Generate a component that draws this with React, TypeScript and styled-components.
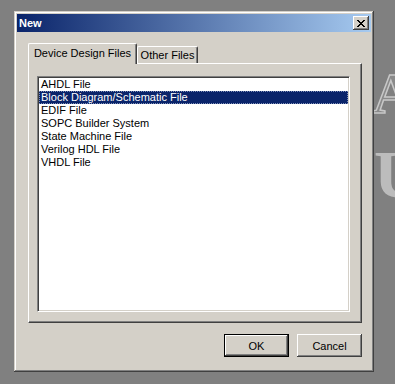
import React from "react";
import styled, { createGlobalStyle } from "styled-components";

const Global = createGlobalStyle`
  html, body { margin: 0; padding: 0; background: #808080; overflow: hidden; }
  #root { width: 395px; height: 384px; }
`;

const Desktop = styled.div`
  position: relative;
  width: 395px;
  height: 384px;
  box-sizing: border-box;
  padding: 11px 0 0 14px;
  background: #808080;
  overflow: hidden;
  font-family: "Liberation Sans", Arial, sans-serif;
  font-size: 11px;
  color: #000;
`;

const BackdropLetter = styled.span<{ $top: number; $left: number; $size: number; $outline?: boolean }>`
  position: absolute;
  top: ${(p) => p.$top}px;
  left: ${(p) => p.$left}px;
  font-family: "Liberation Serif", "Times New Roman", serif;
  font-weight: bold;
  font-size: ${(p) => p.$size}px;
  line-height: 1;
  color: ${(p) => (p.$outline ? "#8a8a8a" : "#bcbcbc")};
  -webkit-text-stroke: ${(p) => (p.$outline ? "1.5px #c8c8c8" : "0")};
`;

const Dialog = styled.div`
  position: relative;
  z-index: 1;
  width: 360px;
  height: 361px;
  box-sizing: border-box;
  padding: 3px;
  background: #d4d0c8;
  box-shadow: inset -1px -1px #404040, inset 1px 1px #d4d0c8, inset -2px -2px #808080,
    inset 2px 2px #ffffff;
  display: flex;
  flex-direction: column;
`;

const TitleBar = styled.div`
  height: 18px;
  flex: none;
  display: flex;
  align-items: center;
  justify-content: space-between;
  padding: 0 2px 0 2px;
  background: linear-gradient(to right, #0a246a, #a6caf0);
`;

const Title = styled.span`
  color: #fff;
  font-weight: bold;
  font-size: 11px;
  line-height: 13px;
`;

const CloseButton = styled.div`
  width: 16px;
  height: 14px;
  box-sizing: border-box;
  background: #d4d0c8;
  box-shadow: inset -1px -1px #404040, inset 1px 1px #ffffff, inset -2px -2px #808080;
  display: flex;
  align-items: center;
  justify-content: center;
`;

const Body = styled.div`
  flex: 1;
  display: flex;
  flex-direction: column;
  padding: 11px 9px 0 11px;
`;

const TabRow = styled.div`
  display: flex;
  align-items: flex-end;
  height: 20px;
  position: relative;
  z-index: 2;
`;

const Tab = styled.div<{ $active?: boolean; $width: number }>`
  box-sizing: border-box;
  width: ${(p) => p.$width}px;
  height: ${(p) => (p.$active ? 21 : 17)}px;
  margin-bottom: ${(p) => (p.$active ? -1 : 0)}px;
  padding-top: ${(p) => (p.$active ? 3 : 2)}px;
  text-align: center;
  line-height: 13px;
  background: #d4d0c8;
  border-left: 1px solid #ffffff;
  border-top: 1px solid #ffffff;
  border-right: 1px solid #404040;
  border-top-left-radius: 2px;
  border-top-right-radius: 2px;
  box-shadow: inset -1px 0 #808080;
  white-space: nowrap;
`;

const Panel = styled.div`
  height: 260px;
  box-sizing: border-box;
  flex: none;
  display: flex;
  flex-direction: column;
  padding: 12px 11px 10px 8px;
  border-left: 1px solid #ffffff;
  border-top: 1px solid #ffffff;
  border-right: 1px solid #404040;
  border-bottom: 1px solid #404040;
  box-shadow: inset -1px -1px #808080;
`;

const ListBox = styled.div`
  flex: 1;
  box-sizing: border-box;
  padding: 1px;
  background: #ffffff;
  border-left: 1px solid #808080;
  border-top: 1px solid #808080;
  border-right: 1px solid #ffffff;
  border-bottom: 1px solid #ffffff;
  box-shadow: inset 1px 1px #404040, inset -1px -1px #d4d0c8;
`;

const Row = styled.div<{ $selected?: boolean }>`
  height: 13px;
  line-height: 13px;
  padding-left: 2px;
  white-space: nowrap;
  background: ${(p) => (p.$selected ? "#0a246a" : "transparent")};
  color: ${(p) => (p.$selected ? "#ffffff" : "#000000")};
  outline: ${(p) => (p.$selected ? "1px dotted #7f8fb8" : "none")};
  outline-offset: -1px;
`;

const ButtonRow = styled.div`
  display: flex;
  justify-content: flex-end;
  gap: 8px;
  margin-top: 11px;
`;

const Button = styled.div<{ $default?: boolean }>`
  width: 65px;
  height: 23px;
  box-sizing: border-box;
  display: flex;
  align-items: center;
  justify-content: center;
  background: #d4d0c8;
  border: ${(p) => (p.$default ? "1px solid #000000" : "none")};
  box-shadow: inset -1px -1px #404040, inset 1px 1px #ffffff, inset -2px -2px #808080;
`;

const files = [
  "AHDL File",
  "Block Diagram/Schematic File",
  "EDIF File",
  "SOPC Builder System",
  "State Machine File",
  "Verilog HDL File",
  "VHDL File",
];

export default function App() {
  return (
    <>
      <Global />
      <Desktop>
        <BackdropLetter $top={65} $left={373} $size={57} $outline>
          A
        </BackdropLetter>
        <BackdropLetter $top={140} $left={374} $size={68}>
          U
        </BackdropLetter>
        <Dialog>
          <TitleBar>
            <Title>New</Title>
            <CloseButton>
              <svg width="8" height="7" viewBox="0 0 8 7" shapeRendering="crispEdges">
                <path
                  d="M0 0h2v1H0zM6 0h2v1H6zM1 1h2v1H1zM5 1h2v1H5zM2 2h4v1H2zM3 3h2v1H3zM2 4h4v1H2zM1 5h2v1H1zM5 5h2v1H5zM0 6h2v1H0zM6 6h2v1H6z"
                  fill="#000"
                />
              </svg>
            </CloseButton>
          </TitleBar>
          <Body>
            <TabRow>
              <Tab $active $width={109}>
                Device Design Files
              </Tab>
              <Tab $width={61}>Other Files</Tab>
            </TabRow>
            <Panel>
              <ListBox>
                {files.map((f, i) => (
                  <Row key={f} $selected={i === 1}>
                    {f}
                  </Row>
                ))}
              </ListBox>
            </Panel>
            <ButtonRow>
              <Button $default>OK</Button>
              <Button>Cancel</Button>
            </ButtonRow>
          </Body>
        </Dialog>
      </Desktop>
    </>
  );
}
